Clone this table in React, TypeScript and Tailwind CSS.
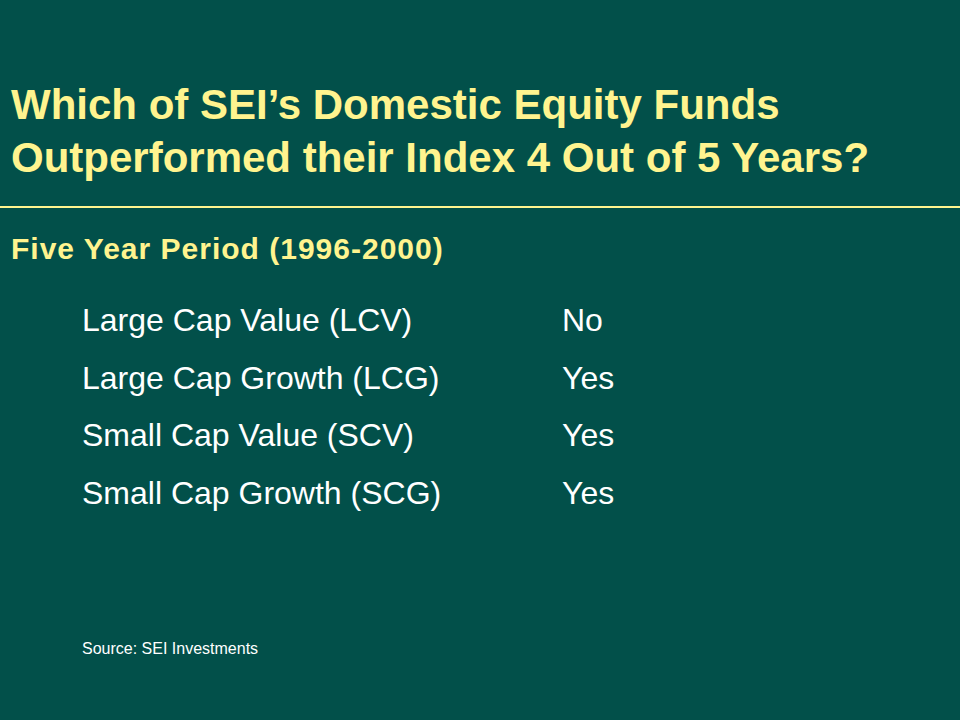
import React from 'react';

const rows = [
  { fund: 'Large Cap Value (LCV)', result: 'No' },
  { fund: 'Large Cap Growth (LCG)', result: 'Yes' },
  { fund: 'Small Cap Value (SCV)', result: 'Yes' },
  { fund: 'Small Cap Growth (SCG)', result: 'Yes' },
];

export default function App() {
  return (
    <div className="w-[960px] h-[720px] bg-[#02504a] font-['Liberation_Sans',Arial,sans-serif] flex flex-col">
      <div className="pt-[78px] pl-[11px] h-[206px]">
        <h1 className="text-[#fff48f] font-bold text-[42px] leading-[53px]">
          Which of SEI’s Domestic Equity Funds
          <br />
          Outperformed their Index 4 Out of 5 Years?
        </h1>
      </div>
      <div className="h-[2px] bg-[#fff48f]" />
      <h2 className="mt-[26px] pl-[11px] text-[#fff48f] font-bold text-[30px] leading-[30px] tracking-[1px]">
        Five Year Period (1996-2000)
      </h2>
      <div className="mt-[28px] pl-[82px] flex flex-col">
        {rows.map((r) => (
          <div key={r.fund} className="flex text-white text-[32px] leading-[57.5px]">
            <span className="w-[480px]">{r.fund}</span>
            <span>{r.result}</span>
          </div>
        ))}
      </div>
      <p className="mt-[118px] pl-[82px] text-white text-[16px] leading-[18px]">Source: SEI Investments</p>
    </div>
  );
}
